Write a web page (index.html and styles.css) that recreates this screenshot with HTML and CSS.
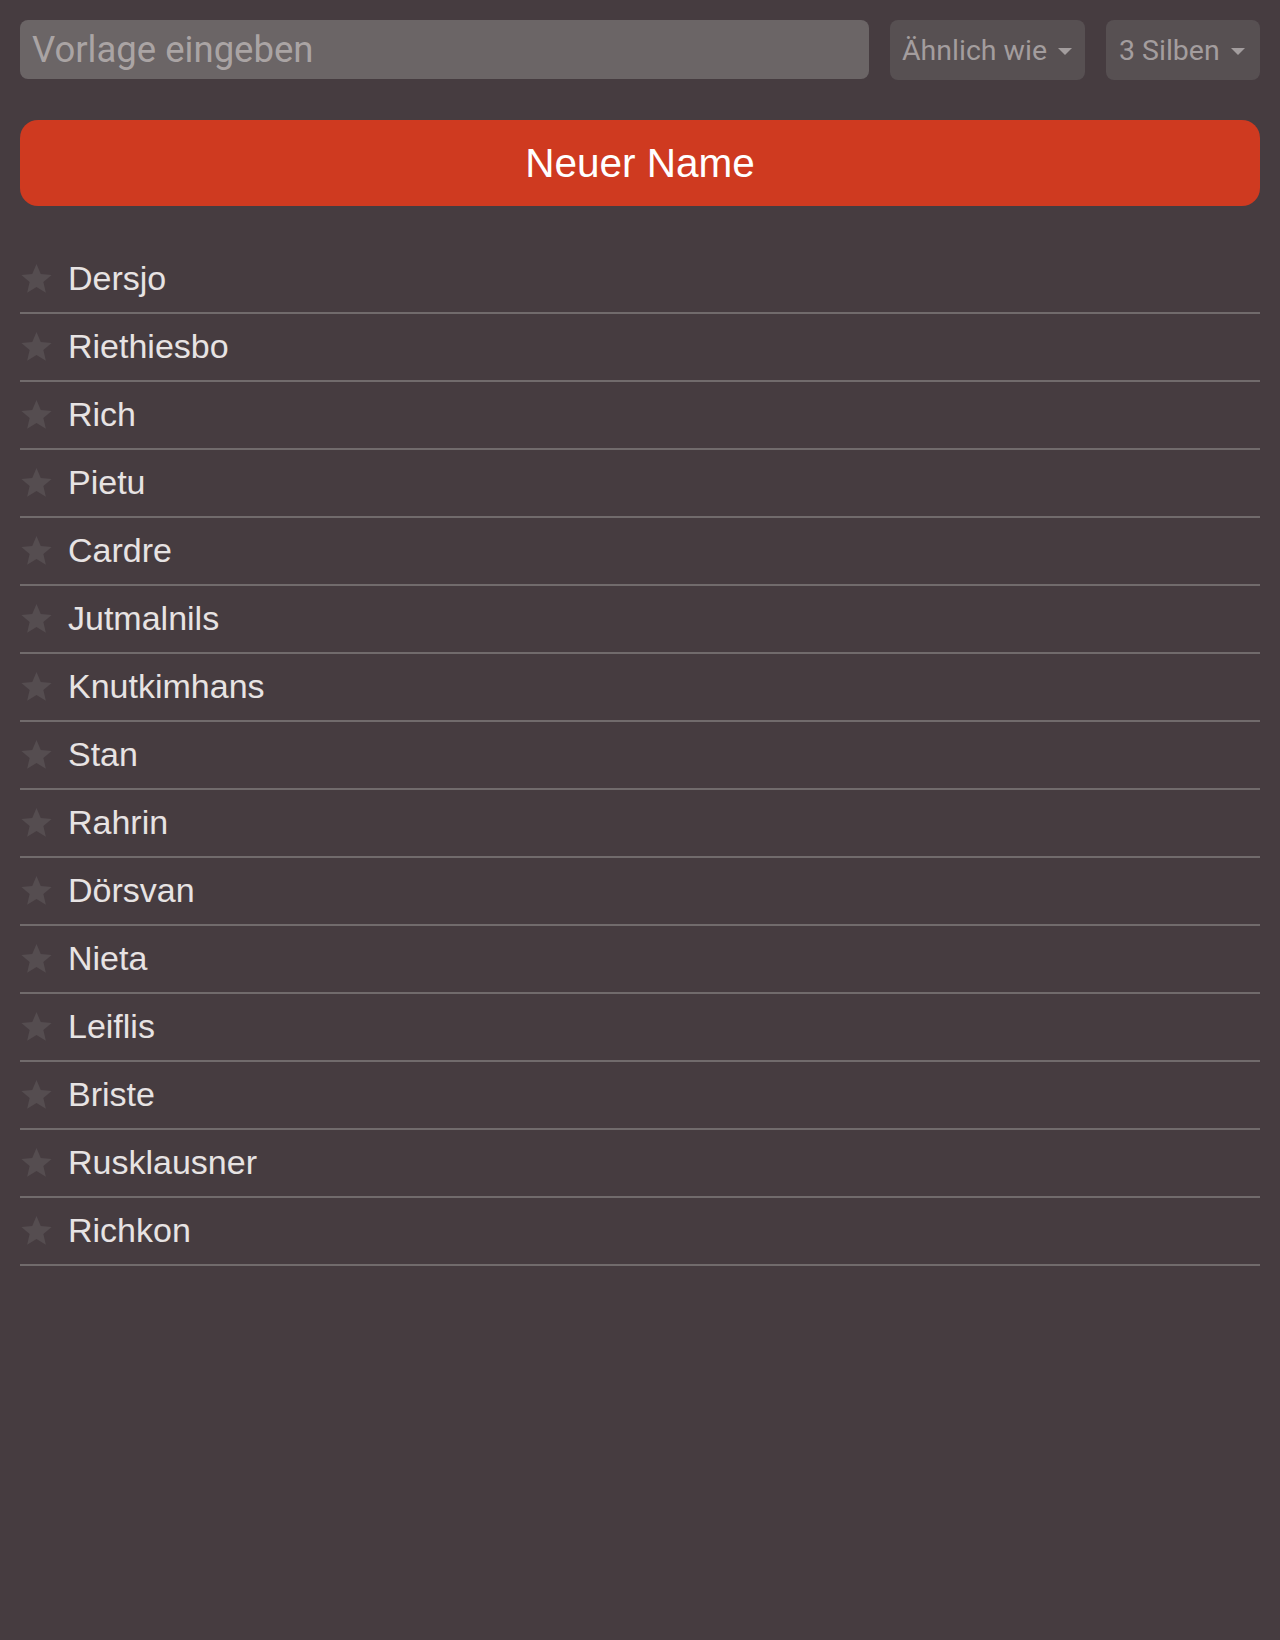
FILE: index.html
```html
<!DOCTYPE html>
<html lang="de">
<head>
<meta charset="utf-8">
<title>Namen</title>
<link rel="stylesheet" href="styles.css">
</head>
<body>
<div class="page">
  <div class="toolbar">
    <input class="template" type="text" placeholder="Vorlage eingeben">
    <div class="select select-mode"><span>Ähnlich wie</span><i class="caret"></i></div>
    <div class="select select-syl"><span>3 Silben</span><i class="caret"></i></div>
  </div>
  <button class="new-name">Neuer Name</button>
  <ul class="names">
    <li><svg class="star" viewBox="0 0 24 24"><path d="M12 1.5l3.1 7.3 7.9.6-6 5.2 1.8 7.7L12 18.2l-6.8 4.1L7 14.6l-6-5.2 7.9-.6z"/></svg><span>Dersjo</span></li>
    <li><svg class="star" viewBox="0 0 24 24"><path d="M12 1.5l3.1 7.3 7.9.6-6 5.2 1.8 7.7L12 18.2l-6.8 4.1L7 14.6l-6-5.2 7.9-.6z"/></svg><span>Riethiesbo</span></li>
    <li><svg class="star" viewBox="0 0 24 24"><path d="M12 1.5l3.1 7.3 7.9.6-6 5.2 1.8 7.7L12 18.2l-6.8 4.1L7 14.6l-6-5.2 7.9-.6z"/></svg><span>Rich</span></li>
    <li><svg class="star" viewBox="0 0 24 24"><path d="M12 1.5l3.1 7.3 7.9.6-6 5.2 1.8 7.7L12 18.2l-6.8 4.1L7 14.6l-6-5.2 7.9-.6z"/></svg><span>Pietu</span></li>
    <li><svg class="star" viewBox="0 0 24 24"><path d="M12 1.5l3.1 7.3 7.9.6-6 5.2 1.8 7.7L12 18.2l-6.8 4.1L7 14.6l-6-5.2 7.9-.6z"/></svg><span>Cardre</span></li>
    <li><svg class="star" viewBox="0 0 24 24"><path d="M12 1.5l3.1 7.3 7.9.6-6 5.2 1.8 7.7L12 18.2l-6.8 4.1L7 14.6l-6-5.2 7.9-.6z"/></svg><span>Jutmalnils</span></li>
    <li><svg class="star" viewBox="0 0 24 24"><path d="M12 1.5l3.1 7.3 7.9.6-6 5.2 1.8 7.7L12 18.2l-6.8 4.1L7 14.6l-6-5.2 7.9-.6z"/></svg><span>Knutkimhans</span></li>
    <li><svg class="star" viewBox="0 0 24 24"><path d="M12 1.5l3.1 7.3 7.9.6-6 5.2 1.8 7.7L12 18.2l-6.8 4.1L7 14.6l-6-5.2 7.9-.6z"/></svg><span>Stan</span></li>
    <li><svg class="star" viewBox="0 0 24 24"><path d="M12 1.5l3.1 7.3 7.9.6-6 5.2 1.8 7.7L12 18.2l-6.8 4.1L7 14.6l-6-5.2 7.9-.6z"/></svg><span>Rahrin</span></li>
    <li><svg class="star" viewBox="0 0 24 24"><path d="M12 1.5l3.1 7.3 7.9.6-6 5.2 1.8 7.7L12 18.2l-6.8 4.1L7 14.6l-6-5.2 7.9-.6z"/></svg><span>Dörsvan</span></li>
    <li><svg class="star" viewBox="0 0 24 24"><path d="M12 1.5l3.1 7.3 7.9.6-6 5.2 1.8 7.7L12 18.2l-6.8 4.1L7 14.6l-6-5.2 7.9-.6z"/></svg><span>Nieta</span></li>
    <li><svg class="star" viewBox="0 0 24 24"><path d="M12 1.5l3.1 7.3 7.9.6-6 5.2 1.8 7.7L12 18.2l-6.8 4.1L7 14.6l-6-5.2 7.9-.6z"/></svg><span>Leiflis</span></li>
    <li><svg class="star" viewBox="0 0 24 24"><path d="M12 1.5l3.1 7.3 7.9.6-6 5.2 1.8 7.7L12 18.2l-6.8 4.1L7 14.6l-6-5.2 7.9-.6z"/></svg><span>Briste</span></li>
    <li><svg class="star" viewBox="0 0 24 24"><path d="M12 1.5l3.1 7.3 7.9.6-6 5.2 1.8 7.7L12 18.2l-6.8 4.1L7 14.6l-6-5.2 7.9-.6z"/></svg><span>Rusklausner</span></li>
    <li><svg class="star" viewBox="0 0 24 24"><path d="M12 1.5l3.1 7.3 7.9.6-6 5.2 1.8 7.7L12 18.2l-6.8 4.1L7 14.6l-6-5.2 7.9-.6z"/></svg><span>Richkon</span></li>
  </ul>
</div>
</body>
</html>
```

FILE: styles.css
```css
* { box-sizing: border-box; }
html, body {
  margin: 0;
  padding: 0;
  background: #463c40;
  min-height: 100%;
}
body {
  font-family: "Liberation Sans", Arial, sans-serif;
  color: #e7e3e3;
}
.page {
  padding: 20px;
}
.toolbar {
  display: flex;
  gap: 21px;
  height: 60px;
}
.template {
  flex: 1;
  min-width: 0;
  height: 59px;
  border: 0;
  outline: none;
  border-radius: 8px;
  background: #6b6566;
  padding: 0 12px;
  font-family: Roboto, "Liberation Sans", sans-serif;
  font-size: 36.5px;
  color: #e7e3e3;
}
.template::placeholder {
  color: #aaa4a4;
  opacity: 1;
}
.select {
  display: flex;
  align-items: center;
  gap: 11px;
  height: 60px;
  padding: 0 12px 0 12px;
  border-radius: 8px;
  background: #575052;
  color: #a39d9e;
  font-family: Roboto, "Liberation Sans", sans-serif;
  font-size: 28.5px;
}
.select-mode { width: 195px; }
.select-syl { width: 154px; padding-left: 13px; }
.caret {
  width: 0;
  height: 0;
  border-left: 7px solid transparent;
  border-right: 7px solid transparent;
  border-top: 7px solid #a39d9e;
  margin-top: 2px;
}
.new-name {
  display: block;
  width: 100%;
  height: 86px;
  margin-top: 40px;
  border: 0;
  border-radius: 18px;
  background: #cf3a20;
  color: #ffffff;
  font-family: "Liberation Sans", Arial, sans-serif;
  font-size: 40.5px;
  padding: 0;
}
.names {
  list-style: none;
  margin: 40px 0 0;
  padding: 0;
}
.names li {
  display: flex;
  align-items: center;
  height: 68px;
  border-bottom: 2px solid #716b6c;
  font-size: 34px;
  padding-bottom: 2px;
}
.star {
  width: 33px;
  height: 33px;
  fill: #554d50;
  margin-right: 15px;
  flex: none;
}
```
